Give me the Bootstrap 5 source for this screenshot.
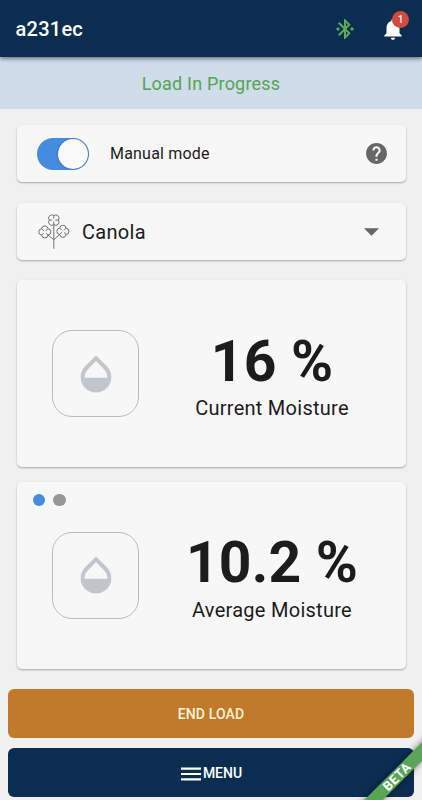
<!DOCTYPE html>
<html lang="en">
<head>
<meta charset="utf-8">
<meta name="viewport" content="width=device-width, initial-scale=1">
<title>a231ec</title>
<link href="https://cdn.jsdelivr.net/npm/bootstrap@5.3.0/dist/css/bootstrap.min.css" rel="stylesheet">
<style>
  body { font-family: Roboto, "Liberation Sans", sans-serif; background: #f0f0f0; color: #1c1c1c; height: 800px; overflow: hidden; position: relative; }
  svg { display: block; flex: none; }
  .topbar { height: 57px; background: #0c2d52; padding: 0 16.5px 0 15.5px; box-shadow: 0 2px 4px rgba(0,0,0,.45); z-index: 2; position: relative; }
  .device-name { font-size: 20px; font-weight: 500; letter-spacing: .25px; line-height: 24px; padding-top: 1px; }
  .bell-wrap { margin-left: 23px; }
  .bell-count { top: -5px; left: 12.5px; width: 17px; height: 17px; background: #d2493f; font-size: 10px; font-weight: 500; }
  .status-strip { height: 52px; background: #cfdce9; color: #55a454; font-size: 18px; letter-spacing: .2px; }
  .panel { background: #f7f7f7; border: 0; border-radius: 5px; box-shadow: 0 1px 2px rgba(0,0,0,.3); margin: 0 16.5px; }
  .row-panel { height: 57px; }
  .mode-row { margin-top: 16px; padding: 0 17px 0 20px; }
  .crop-row { margin-top: 21px; padding: 0 26.5px 0 21px; }
  .current { margin-top: 20px; }
  .average { margin-top: 14.5px; }
  .mode-switch { width: 52.5px; height: 32px; border-radius: 16px; background: #458be0; padding: 1px; }
  .mode-knob { width: 30px; height: 30px; background: #fafafa; box-shadow: 0 0 2px rgba(0,0,0,.35); }
  .mode-label { font-size: 16px; letter-spacing: .2px; margin-left: 21px; }
  .crop-label { font-size: 20px; letter-spacing: .3px; margin-left: 12.5px; }
  .reading { height: 187px; padding-left: 35.5px; }
  .tile { width: 87px; height: 87px; border: 1.5px solid #b9bbc2; border-radius: 20px; }
  .figure-value { font-size: 57px; font-weight: 700; line-height: 60px; letter-spacing: .2px; color: #1c1c1c; }
  .figure-label { font-size: 20px; line-height: 24px; letter-spacing: .27px; margin-top: 4.5px; }
  .figure-text { width: 266px; padding-top: 4.5px; }
  .pager { top: 12px; left: 16px; gap: 8px; }
  .pager span { width: 12.5px; height: 12.5px; }
  .pg-on { background: #458be0; }
  .pg-off { background: #979797; }
  .action { margin: 0 8px; height: 49px; border-radius: 6px; font-size: 14px; font-weight: 500; border: 0; padding: 2px 0 0; color: #fff; }
  .action-end { background: #c17a2b; color: #fff3d6; margin-top: 20.5px; letter-spacing: .15px; }
  .action-menu { background: #0c2d52; margin-top: 10px; padding-left: 1px; }
  .menu-word { margin-left: 2px; }
  .beta-corner { right: 0; bottom: 0; width: 72px; height: 72px; overflow: hidden; }
  .beta-ribbon { width: 120px; height: 13px; left: -13px; top: 42px; transform: rotate(-45deg); background: #58a557; box-shadow: 0 0 6px rgba(0,0,0,.5); color: #fff; font-size: 13px; font-weight: 700; line-height: 13px; letter-spacing: .5px; }
</style>
<script src="https://cdn.jsdelivr.net/npm/bootstrap@5.3.0/dist/js/bootstrap.bundle.min.js"></script>
</head>
<body>
<header class="topbar d-flex align-items-center text-white">
  <div class="device-name me-auto">a231ec</div>
  <svg width="24" height="24" viewBox="0 0 24 24" fill="#5bab57"><path d="M7 12l-2-2-2 2 2 2 2-2zm10.71-4.29L12 2h-1v7.59L6.41 5 5 6.41 10.59 12 5 17.59 6.41 19 11 14.41V22h1l5.71-5.71-4.3-4.29 4.3-4.29zM13 5.83l1.88 1.88L13 9.59V5.83zm1.88 10.46L13 18.17v-3.76l1.88 1.88zM19 10l-2 2 2 2 2-2-2-2z"/></svg>
  <div class="bell-wrap position-relative">
    <svg width="26" height="26" viewBox="0 0 24 24" fill="#fafafa"><path d="M12 22c1.1 0 2-.9 2-2h-4c0 1.1.89 2 2 2zm6-6v-5c0-3.07-1.64-5.64-4.5-6.32V4c0-.83-.67-1.5-1.5-1.5s-1.5.67-1.5 1.5v.68C7.63 5.36 6 7.92 6 11v5l-2 2v1h16v-1l-2-2z"/></svg>
    <span class="bell-count position-absolute rounded-circle d-flex align-items-center justify-content-center">1</span>
  </div>
</header>
<div class="status-strip d-flex align-items-center justify-content-center">Load In Progress</div>

<main class="d-flex flex-column">
  <section class="card panel row-panel mode-row flex-row align-items-center">
    <div class="mode-switch d-flex justify-content-end"><div class="mode-knob rounded-circle"></div></div>
    <div class="mode-label me-auto">Manual mode</div>
    <svg width="25" height="25" viewBox="0 0 24 24" fill="#666"><path d="M12 2C6.48 2 2 6.48 2 12s4.48 10 10 10 10-4.48 10-10S17.52 2 12 2zm1 17h-2v-2h2v2zm2.07-7.75l-.9.92C13.45 12.9 13 13.5 13 15h-2v-.5c0-1.1.45-2.1 1.17-2.83l1.24-1.26c.37-.36.59-.86.59-1.41 0-1.1-.9-2-2-2s-2 .9-2 2H8c0-2.21 1.79-4 4-4s4 1.79 4 4c0 .88-.36 1.68-.93 2.25z"/></svg>
  </section>

  <section class="card panel row-panel crop-row flex-row align-items-center">
    <svg width="32" height="36" viewBox="0 0 32 36" fill="none" stroke="#686868" stroke-width=".9">
      <defs>
        <g id="bloom">
          <path d="M0-4.500A3.200 3.200 0 0 1 4.500 0A3.200 3.200 0 0 1 0 4.500A3.200 3.200 0 0 1-4.500 0A3.200 3.200 0 0 1 0-4.500Z"/>
          <path d="M0-4.500V-1.500M0 4.500V1.500M-4.500 0H-1.500M4.500 0H1.500"/>
        </g>
      </defs>
      <use href="#bloom" x="15.8" y="6.1"/>
      <use href="#bloom" transform="translate(6.8 17.900) rotate(45)"/>
      <use href="#bloom" transform="translate(24.900 17.300) rotate(45)"/>
      <path d="M15.800 10.500V34.800M10 21.100L15.800 25.700L21.700 20.500"/>
    </svg>
    <div class="crop-label me-auto">Canola</div>
    <svg width="15" height="8" viewBox="0 0 15 8" fill="#666"><path d="M0 .3H15L7.500 7.800Z"/></svg>
  </section>

  <section class="card panel reading current flex-row align-items-center">
    <div class="tile d-flex align-items-center justify-content-center flex-shrink-0">
      <svg width="46" height="46" viewBox="0 0 24 24" fill="#c1c5cd"><path d="M17.660 8L12 2.350 6.340 8C4.780 9.560 4 11.640 4 13.640s.78 4.110 2.340 5.670 3.610 2.350 5.660 2.350 4.100-.79 5.660-2.350S20 15.640 20 13.640 19.220 9.560 17.660 8zM6 14c.01-2 .62-3.270 1.760-4.400L12 5.270l4.240 4.380C17.380 10.770 17.990 12 18 14H6z"/></svg>
    </div>
    <div class="figure-text text-center">
      <div class="figure-value">16 %</div>
      <div class="figure-label">Current Moisture</div>
    </div>
  </section>

  <section class="card panel reading average flex-row align-items-center">
    <div class="pager position-absolute d-flex"><span class="pg-on rounded-circle"></span><span class="pg-off rounded-circle"></span></div>
    <div class="tile d-flex align-items-center justify-content-center flex-shrink-0">
      <svg width="46" height="46" viewBox="0 0 24 24" fill="#c1c5cd"><path d="M17.660 8L12 2.350 6.340 8C4.780 9.560 4 11.640 4 13.640s.78 4.110 2.340 5.670 3.610 2.350 5.660 2.350 4.100-.79 5.660-2.350S20 15.640 20 13.640 19.220 9.560 17.660 8zM6 14c.01-2 .62-3.270 1.760-4.400L12 5.270l4.240 4.380C17.380 10.770 17.990 12 18 14H6z"/></svg>
    </div>
    <div class="figure-text text-center">
      <div class="figure-value">10.2 %</div>
      <div class="figure-label">Average Moisture</div>
    </div>
  </section>

  <button class="btn action action-end">END LOAD</button>
  <button class="btn action action-menu d-flex align-items-center justify-content-center">
    <svg width="20" height="14" viewBox="0 0 20 14" fill="#fff"><path d="M0 .5H20V2.700H0ZM0 5.900H20V8.100H0ZM0 11.300H20V13.500H0Z"/></svg>
    <span class="menu-word">MENU</span>
  </button>
</main>

<div class="beta-corner position-absolute">
  <div class="beta-ribbon position-absolute text-center">BETA</div>
</div>
</body>
</html>
